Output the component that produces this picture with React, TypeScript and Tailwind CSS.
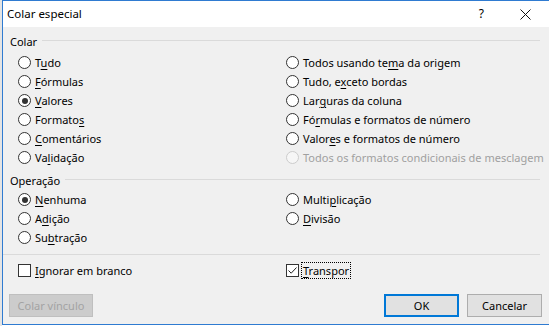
import React from 'react'

type Opt = { pre: string; key?: string; post?: string; checked?: boolean; disabled?: boolean }

const colarLeft: Opt[] = [
  { pre: 'T', key: 'u', post: 'do' },
  { pre: '', key: 'F', post: 'órmulas' },
  { pre: '', key: 'V', post: 'alores', checked: true },
  { pre: 'Formato', key: 's', post: '' },
  { pre: '', key: 'C', post: 'omentários' },
  { pre: 'Va', key: 'l', post: 'idação' },
]

const colarRight: Opt[] = [
  { pre: 'Todos usando te', key: 'm', post: 'a da origem' },
  { pre: 'Tudo, e', key: 'x', post: 'ceto bordas' },
  { pre: 'Lar', key: 'g', post: 'uras da coluna' },
  { pre: 'Fó', key: 'r', post: 'mulas e formatos de número' },
  { pre: 'Valor', key: 'e', post: 's e formatos de número' },
  { pre: 'Todos os formatos condicionais de mesclagem', disabled: true },
]

const opLeft: Opt[] = [
  { pre: '', key: 'N', post: 'enhuma', checked: true },
  { pre: 'A', key: 'd', post: 'ição' },
  { pre: 'Su', key: 'b', post: 'tração' },
]

const opRight: Opt[] = [
  { pre: 'Multi', key: 'p', post: 'licação' },
  { pre: '', key: 'D', post: 'ivisão' },
]

function Label({ o }: { o: Opt }) {
  return (
    <span className={o.disabled ? 'text-[#a0a0a0]' : 'text-black'}>
      {o.pre}
      {o.key && <span className="underline underline-offset-[2px]">{o.key}</span>}
      {o.post}
    </span>
  )
}

function Radio({ o }: { o: Opt }) {
  return (
    <div className="h-[19px] flex items-center whitespace-nowrap">
      <span
        className={
          'w-[13px] h-[13px] rounded-full border flex items-center justify-center shrink-0 ' +
          (o.disabled ? 'border-[#cccccc] bg-[#f6f6f6]' : 'border-[#333333] bg-white')
        }
      >
        {o.checked && <span className="w-[6px] h-[6px] rounded-full bg-[#333333]" />}
      </span>
      <span className="ml-[4px]">
        <Label o={o} />
      </span>
    </div>
  )
}

function Header({ text }: { text: string }) {
  return (
    <div className="h-[19px] flex items-center pl-[7px] pr-[9px]">
      <span>{text}</span>
      <span className="flex-1 h-px bg-[#dadada] ml-[5px] -mt-[2px]" />
    </div>
  )
}

export default function App() {
  return (
    <div className="w-[549px] h-[326px] flex bg-white overflow-hidden font-['Noto_Sans',sans-serif] text-[11px] leading-none">
      <div className="w-[2px] shrink-0 bg-[#e4e4e4]" />
      <div className="flex-1 min-w-0 h-[325px] flex flex-col border-l border-t border-b border-[#2f7bd1]">
        {/* Title bar */}
        <div className="h-[26px] bg-white flex items-center pl-[4px] shrink-0">
          <span className="text-[11.5px]">Colar especial</span>
          <span className="ml-auto mr-[36px] text-[12px]">?</span>
          <svg width="11" height="11" viewBox="0 0 11 11" className="mr-[18px]">
            <path d="M0.5 0.5 L10.5 10.5 M10.5 0.5 L0.5 10.5" stroke="#111" strokeWidth="1" />
          </svg>
        </div>

        <div className="flex-1 bg-[#f0f0f0] pt-[5px] flex flex-col">
          <Header text="Colar" />
          <div className="grid grid-cols-[268px_1fr] pl-[15px] mt-[2px]">
            <div>
              {colarLeft.map((o, i) => (
                <Radio key={i} o={o} />
              ))}
            </div>
            <div>
              {colarRight.map((o, i) => (
                <Radio key={i} o={o} />
              ))}
            </div>
          </div>

          <div className="mt-[4px]">
            <Header text="Operação" />
          </div>
          <div className="grid grid-cols-[268px_1fr] pl-[15px]">
            <div>
              {opLeft.map((o, i) => (
                <Radio key={i} o={o} />
              ))}
            </div>
            <div>
              {opRight.map((o, i) => (
                <Radio key={i} o={o} />
              ))}
            </div>
          </div>

          <div className="h-px bg-[#dadada] mt-[7px] mr-[9px]" />

          <div className="grid grid-cols-[268px_1fr] pl-[15px] mt-[6px]">
            <div className="h-[19px] flex items-center">
              <span className="w-[13px] h-[13px] border border-[#333333] bg-white shrink-0" />
              <span className="ml-[4px]">
                <span className="underline underline-offset-[2px]">I</span>gnorar em branco
              </span>
            </div>
            <div className="h-[19px] flex items-center">
              <span className="w-[13px] h-[13px] border border-[#333333] bg-white shrink-0 flex items-center justify-center">
                <svg width="11" height="11" viewBox="0 0 11 11">
                  <path d="M1.5 5.5 L4.2 8.2 L9.5 2.5" fill="none" stroke="#222" strokeWidth="1" />
                </svg>
              </span>
              <span className="ml-[2px] border border-dotted border-black px-[1px] py-[2px]">
                <span className="underline underline-offset-[2px]">T</span>ranspor
              </span>
            </div>
          </div>

          <div className="flex items-center mt-[14px] pl-[6px] pr-[7px]">
            <button className="w-[84px] h-[23px] bg-[#cccccc] border border-[#bfbfbf] text-[#a3a3a3]">
              Colar vínculo
            </button>
            <button className="ml-auto w-[75px] h-[23px] bg-[#e1e1e1] border-2 border-[#0078d7]">
              OK
            </button>
            <button className="ml-[8px] w-[75px] h-[23px] bg-[#e1e1e1] border border-[#adadad]">
              Cancelar
            </button>
          </div>
        </div>
      </div>
    </div>
  )
}
